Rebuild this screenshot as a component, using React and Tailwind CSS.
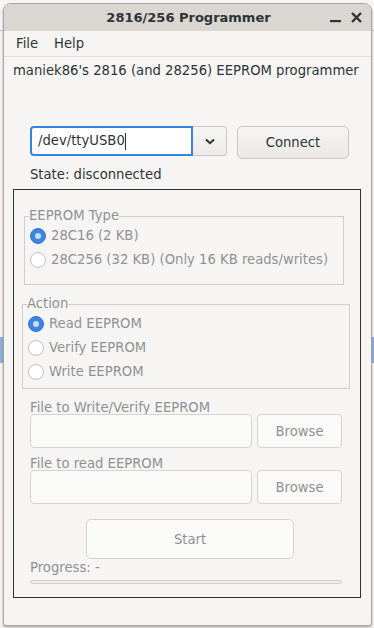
import React from 'react';

const Radio = ({ checked }) => (
  <span
    className={
      checked
        ? 'w-[16px] h-[16px] rounded-full bg-[#3d86e0] border border-[#3178d0] flex items-center justify-center shrink-0'
        : 'w-[16px] h-[16px] rounded-full bg-white border border-[#c5bfb9] shrink-0'
    }
  >
    {checked && <span className="w-[6px] h-[6px] rounded-full bg-[#c9ddf7]" />}
  </span>
);

const RadioRow = ({ checked, label }) => (
  <div className="h-[24px] flex items-center gap-[5px]">
    <Radio checked={checked} />
    <span className="text-[#8f9293] leading-[16px]">{label}</span>
  </div>
);

const FileRow = ({ label, mt }) => (
  <>
    <div className={`ml-[16px] ${mt} leading-[14px] text-[#8f9293]`}>{label}</div>
    <div className="ml-[16px] mt-[-1px] flex gap-[5px]">
      <div className="w-[222px] h-[34px] rounded-[4px] border border-[#d8d3ce] bg-[#fafaf9]" />
      <button
        type="button"
        className="w-[85px] h-[34px] pt-[2px] rounded-[4px] border border-[#d8d3ce] bg-[#fafaf9] text-[#8f9293]"
      >
        Browse
      </button>
    </div>
  </>
);

const App = () => {
  return (
    <div className="relative min-h-screen overflow-hidden bg-[#f6f5f4] text-[13.2px] text-[#2e3436] font-['DejaVu_Sans',sans-serif]">
      {/* bits of the desktop behind the window */}
      <div className="absolute left-0 right-0 top-[30px] h-px bg-[#c8c4c0]" />
      <div className="absolute left-0 w-[4px] top-[337px] h-[26px] bg-[#8fb1dd]" />
      <div className="absolute right-0 w-[4px] top-[337px] h-[26px] bg-[#8fb1dd]" />

      <div className="relative pt-[3px] pl-[3px]">
        <div className="w-[369px] h-[623px] rounded-t-[8px] rounded-b-[3px] border border-[#a9a49f] bg-[#f6f5f4] shadow-[0_2px_3px_rgba(0,0,0,0.25)] flex flex-col overflow-hidden">
          {/* title bar */}
          <div className="h-[27px] shrink-0 bg-[#dad6d2] relative flex items-center justify-center">
            <span className="font-bold text-[13px] leading-[16px] pl-[2px]">2816/256 Programmer</span>
            <div className="absolute right-[9px] top-0 h-full flex items-center gap-[10px]">
              <svg width="11" height="11" viewBox="0 0 11 11">
                <rect x="0" y="8" width="11" height="2.2" fill="#2e3436" />
              </svg>
              <svg width="11" height="11" viewBox="0 0 11 11">
                <path d="M1 1 L10 10 M10 1 L1 10" stroke="#2e3436" strokeWidth="2.4" />
              </svg>
            </div>
          </div>

          {/* menu bar */}
          <div className="h-[26px] shrink-0 flex items-center gap-[16px] pl-[12px] border-b border-[#e2dfdc]">
            <span>File</span>
            <span>Help</span>
          </div>

          <div className="pl-[9px] mt-[6px] leading-[16px]">maniek86's 2816 (and 28256) EEPROM programmer</div>

          {/* port row */}
          <div className="ml-[26px] mt-[47px] flex items-start">
            <div className="flex">
              <div className="w-[163px] h-[30px] rounded-l-[4px] border-2 border-[#3584e4] bg-white flex items-center pl-[6px]">
                <span>/dev/ttyUSB0</span>
                <span className="w-px h-[17px] bg-[#2e3436]" />
              </div>
              <button
                type="button"
                className="w-[34px] h-[30px] rounded-r-[4px] border border-l-0 border-[#cdc7c2] bg-gradient-to-b from-[#f6f5f4] to-[#edebe9] flex items-center justify-center"
              >
                <svg width="10" height="7" viewBox="0 0 10 7">
                  <path d="M1 1.5 L5 5.2 L9 1.5" fill="none" stroke="#2e3436" strokeWidth="2" />
                </svg>
              </button>
            </div>
            <button
              type="button"
              className="ml-[10px] w-[112px] h-[33px] pt-[1px] rounded-[5px] border border-[#cdc7c2] bg-gradient-to-b from-[#f6f5f4] to-[#ebe9e7] text-[#2e3436]"
            >
              Connect
            </button>
          </div>

          <div className="ml-[26px] mt-[8px] leading-[16px]">State: disconnected</div>

          {/* main frame */}
          <div className="ml-[9px] mt-[6px] w-[348px] h-[409px] border border-[#2e3436] flex flex-col">
            <fieldset className="ml-[10px] mt-[18px] w-[320px] border border-[#d3cec9] pl-[5px] pb-[12px]">
              <legend className="leading-[16px] text-[#8f9293] ml-[-1px]">EEPROM Type</legend>
              <RadioRow checked label="28C16 (2 KB)" />
              <RadioRow label="28C256 (32 KB) (Only 16 KB reads/writes)" />
            </fieldset>

            <fieldset className="ml-[8px] mt-[11px] w-[328px] border border-[#d3cec9] pl-[5px] pb-[4px]">
              <legend className="leading-[16px] text-[#8f9293] ml-[-1px]">Action</legend>
              <RadioRow checked label="Read EEPROM" />
              <RadioRow label="Verify EEPROM" />
              <RadioRow label="Write EEPROM" />
            </fieldset>

            <FileRow label="File to Write/Verify EEPROM" mt="mt-[12px]" />
            <FileRow label="File to read EEPROM" mt="mt-[9px]" />

            <button
              type="button"
              className="ml-[72px] mt-[15px] w-[208px] h-[40px] pt-[1px] rounded-[5px] border border-[#d8d3ce] bg-[#fafaf9] text-[#8f9293]"
            >
              Start
            </button>

            <div className="ml-[16px] mt-[2px] leading-[14px] text-[#8f9293]">Progress: -</div>
            <div className="ml-[16px] mt-[5px] w-[312px] h-[4px] rounded-full border border-[#d3cec9] bg-[#efedeb]" />
          </div>
        </div>
      </div>
    </div>
  );
};

export default App;
